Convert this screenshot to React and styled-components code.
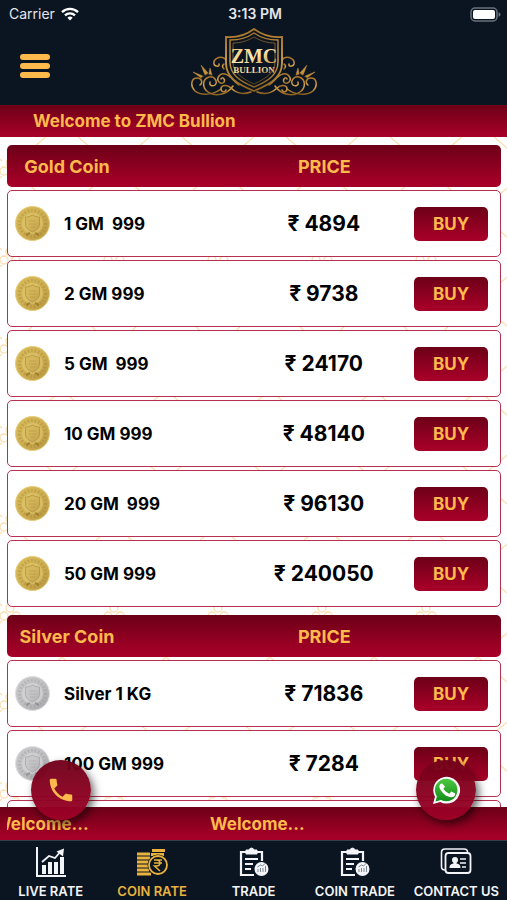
import React from 'react';
import styled, { createGlobalStyle } from 'styled-components';

const GlobalStyle = createGlobalStyle`
  * {
    box-sizing: border-box;
  }

  body {
    margin: 0;
    font-family: Inter, Roboto, "Liberation Sans", sans-serif;
  }
`;

const crimson = 'linear-gradient(to bottom, #6c0017 0%, #a50027 90%)';
const gold = '#fdb94b';

const Screen = styled.div`
  position: relative;
  display: flex;
  flex-direction: column;
  height: 100vh;
  overflow: hidden;
  background-color: #0b1521;
`;

const StatusBar = styled.div`
  display: grid;
  grid-template-columns: 1fr auto 1fr;
  align-items: center;
  height: 28px;
  padding: 0 6px 0 9px;
  color: #e3e6ea;
  font-size: 14px;
  line-height: 20px;
`;

const Carrier = styled.span`
  display: flex;
  align-items: center;
  gap: 6px;
`;

const Clock = styled.span`
  font-weight: 600;
`;

const BatteryIcon = styled.svg`
  justify-self: end;
`;

const Header = styled.header`
  display: grid;
  grid-template-columns: 1fr auto 1fr;
  align-items: center;
  height: 77px;
  padding: 0 20px 4px;
`;

const MenuButton = styled.button`
  display: flex;
  flex-direction: column;
  gap: 3px;
  width: 30px;
  padding: 0;
  border: none;
  background: none;
  cursor: pointer;
`;

const MenuBar = styled.span`
  height: 6px;
  border-radius: 3px;
  background-color: ${gold};
`;

const Welcome = styled.div`
  height: 32px;
  padding: 0 33px;
  background: ${crimson};
  color: ${gold};
  font-size: 17px;
  font-weight: 700;
  line-height: 32px;
`;

/* Danh sách giá */
const Content = styled.main`
  position: relative;
  flex: 1;
  min-height: 0;
  overflow: hidden;
  padding: 8px 6px 0 7px;
  background-color: #ffffff;
`;

const Pattern = styled.svg`
  position: absolute;
  top: 0;
  left: 0;
  width: 100%;
  height: 100%;
`;

const Group = styled.section`
  position: relative;
  display: flex;
  flex-direction: column;
  gap: 3px;
  margin-bottom: 8px;
`;

const GroupHead = styled.div`
  display: grid;
  grid-template-columns: 5fr 4fr 74px;
  align-items: center;
  height: 42px;
  padding-right: 12px;
  border-radius: 5px;
  background: ${crimson};
  color: ${gold};
  font-size: 18px;
  font-weight: 700;
`;

const GroupTitle = styled.span`
  width: 120px;
  text-align: center;
`;

const Centered = styled.span`
  text-align: center;
`;

const Row = styled.div`
  display: grid;
  grid-template-columns: 5fr 4fr 74px;
  align-items: center;
  height: 67px;
  padding-right: 12px;
  border: 1px solid #b5314f;
  border-radius: 5px;
  background-color: #ffffff;
`;

const Product = styled.div`
  display: flex;
  align-items: center;
  gap: 14px;
  padding-left: 7px;
  color: #000000;
  font-size: 17px;
  font-weight: 700;
  white-space: pre;
`;

const Price = styled.span`
  color: #000000;
  font-size: 21px;
  font-weight: 700;
  text-align: center;
`;

const BuyButton = styled.button`
  height: 34px;
  padding: 0;
  border: none;
  border-radius: 5px;
  background: ${crimson};
  color: ${gold};
  font-family: inherit;
  font-size: 17px;
  font-weight: 700;
  cursor: pointer;
`;

const Ticker = styled.div`
  padding: 0 7px;
  background: ${crimson};
`;

const TickerTrack = styled.div`
  display: flex;
  overflow: hidden;
  height: 33px;
  color: ${gold};
  font-size: 17px;
  font-weight: 700;
  line-height: 34px;
`;

const TickerText = styled.span`
  flex: none;
  width: 216px;

  &:first-child {
    margin-left: -13px;
  }
`;

const Fab = styled.a`
  position: absolute;
  bottom: 80px;
  ${(props) => props.$side}: 31px;
  display: flex;
  align-items: center;
  justify-content: center;
  width: 60px;
  height: 60px;
  border-radius: 50%;
  background: linear-gradient(to bottom, rgba(112, 0, 25, 0.96), rgba(158, 0, 38, 0.96));
  box-shadow: 3px 4px 8px rgba(0, 0, 0, 0.6);
`;

const Nav = styled.nav`
  display: flex;
  height: 60px;
  border-top: 1px solid #33404a;
`;

const NavItem = styled.a`
  display: flex;
  flex: 1;
  flex-direction: column;
  align-items: center;
  gap: 5px;
  padding-top: 5px;
  color: ${(props) => (props.$active ? '#e8b23c' : '#f2f4f7')};
  font-size: 13px;
  font-weight: 600;
  line-height: 16px;
  text-decoration: none;
  white-space: nowrap;
`;

const goldCoins = [
  { name: '1 GM  999', price: 4894 },
  { name: '2 GM 999', price: 9738 },
  { name: '5 GM  999', price: 24170 },
  { name: '10 GM 999', price: 48140 },
  { name: '20 GM  999', price: 96130 },
  { name: '50 GM 999', price: 240050 },
];

const silverCoins = [
  { name: 'Silver 1 KG', price: 71836 },
  { name: '100 GM 999', price: 7284 },
  { name: '', price: '' },
];

const Wifi = () => (
  <svg width="18" height="14" viewBox="0 0 18 14" fill="none" stroke="#ffffff" strokeWidth="2.4">
    <path d="M1 5.2a11.4 11.4 0 0 1 16 0" />
    <path d="M4 8.4a7.2 7.2 0 0 1 10 0" />
    <path d="M9 13.6l-2.6-2.8a3.8 3.8 0 0 1 5.2 0z" fill="#ffffff" stroke="none" />
  </svg>
);

const Battery = () => (
  <BatteryIcon width="31" height="15" viewBox="0 0 31 15">
    <rect x="1" y="1" width="26" height="13" rx="4" fill="none" stroke="#6a727b" strokeWidth="1.5" />
    <rect x="3" y="3" width="22" height="9" rx="2" fill="#ffffff" />
    <path d="M28.5 5.2c1.6.6 2 1.4 2 2.3s-.4 1.7-2 2.3z" fill="#6a727b" />
  </BatteryIcon>
);

const Flourish = () => (
  <g fill="none" stroke="url(#goldLine)" strokeWidth="1.5" strokeLinecap="round">
    <path d="M60 64c-8 3-15 1-20-4-4-4-10-3-10 1 0 3 4 4 5 1" />
    <path d="M48 57c-5-3-8-10-14-11-6-1-9 5-6 8 3 3 7 0 5-3-1-2-3-1-3 0" />
    <path d="M42 58c-6 9-18 11-25 6-6-4-6-13 1-15 6-1 9 5 6 8-3 2-6 0-5-3" />
    <path d="M39 45c0-6-2-12-6-15-5-2-11 1-10 6 1 3 6 3 5 0" />
    <path d="M33 41c-2-2-2-4 0-5" />
    <path d="M30 61c-8 6-20 7-26 2-5-5-4-13 2-13 5 0 6 5 3 7" />
    <path d="M14 47l-4-10 7 8zM12 48l-10-4 8 6zM18 46l1-6 2 7z" fill="#c8923a" strokeWidth="0.5" />
  </g>
);

const Logo = () => (
  <svg width="126" height="76" viewBox="0 0 126 76" role="img" aria-label="ZMC Bullion">
    <defs>
      <linearGradient id="goldLine" x1="0" y1="0" x2="0" y2="1">
        <stop offset="0" stopColor="#a9742b" />
        <stop offset="0.5" stopColor="#d3a24c" />
        <stop offset="1" stopColor="#8d611f" />
      </linearGradient>
      <linearGradient id="goldText" x1="0" y1="0" x2="1" y2="1">
        <stop offset="0" stopColor="#e9bf66" />
        <stop offset="0.5" stopColor="#ffe9b0" />
        <stop offset="1" stopColor="#b9822f" />
      </linearGradient>
    </defs>
    <Flourish />
    <g transform="translate(126 0) scale(-1 1)">
      <Flourish />
    </g>
    <g fill="#0b1521" stroke="url(#goldLine)">
      <path d="M63 1c8 6 17 9 28 8v26c0 14-11 21-28 28-17-7-28-14-28-28V9c11 1 20-2 28-8z" strokeWidth="1.8" />
      <path d="M63 5c7 5 15 7 24 7v22c0 12-9 19-24 25-15-6-24-13-24-25V12c9 0 17-2 24-7z" strokeWidth="1.4" />
      <path d="M63 9c7 4 13 6 21 6v19c0 10-8 16-21 22-13-6-21-12-21-22V15c8 0 14-2 21-6z" strokeWidth="0.6" />
    </g>
    <g fill="url(#goldText)" fontFamily="Liberation Serif, serif" fontWeight="bold" textAnchor="middle">
      <text x="63" y="35" fontSize="20">ZMC</text>
      <text x="63" y="45" fontSize="9">BULLION</text>
    </g>
  </svg>
);

const Coin = ({ silver }) => {
  const id = silver ? 'silverFace' : 'goldFace';
  const dark = silver ? '#8f8f92' : '#9b7a24';
  const light = silver ? '#e0e0e2' : '#e6cd78';
  return (
    <svg width="35" height="35" viewBox="0 0 35 35">
      <defs>
        <linearGradient id={id} x1="0" y1="0" x2="1" y2="1">
          <stop offset="0" stopColor={silver ? '#c9c9cb' : '#d8bb5a'} />
          <stop offset="0.5" stopColor={silver ? '#c1c1c3' : '#cfb055'} />
          <stop offset="1" stopColor={silver ? '#a5a5a8' : '#b5953f'} />
        </linearGradient>
      </defs>
      <circle cx="17.5" cy="17.5" r="17" fill={`url(#${id})`} stroke={light} />
      <circle cx="17.5" cy="17.5" r="13" fill="none" stroke={dark} strokeWidth="3" strokeDasharray="1.5 2" opacity="0.35" />
      <circle cx="17.5" cy="17.5" r="10.5" fill={light} opacity="0.5" />
      <path d="M17.5 9c2.5 1.5 4.5 2 7 2v7c0 4-3 6-7 8-4-2-7-4-7-8v-7c2.5 0 4.5-.5 7-2z" fill={`url(#${id})`} stroke={dark} strokeWidth="0.7" opacity="0.7" />
      <path d="M14 15h7M14 18h7M15 21h5" stroke={dark} opacity="0.3" />
      <path d="M11 29l4-2M24 29l-4-2" stroke={dark} strokeWidth="2" opacity="0.8" />
    </svg>
  );
};

const ChainPattern = () => (
  <Pattern aria-hidden="true">
    <defs>
      <pattern id="chain" x="-42" y="-14" width="104" height="89" patternUnits="userSpaceOnUse">
        <g fill="none" stroke="#fbdfae" strokeWidth="1.3">
          <path d="M0 0l44 38M104 0L60 38M0 89l44-36M104 89L60 53" />
          <circle cx="52" cy="40" r="4" />
          <circle cx="46" cy="48" r="4" />
          <circle cx="58" cy="48" r="4" />
        </g>
      </pattern>
    </defs>
    <rect width="100%" height="100%" fill="url(#chain)" />
  </Pattern>
);

const PhoneIcon = () => (
  <svg width="30" height="30" viewBox="0 0 24 24" fill={gold}>
    <path d="M20 15.5c-1.25 0-2.45-.2-3.57-.57a1 1 0 0 0-1.02.24l-2.2 2.2a15.1 15.1 0 0 1-6.59-6.59l2.2-2.2c.28-.28.36-.67.25-1.02A11.4 11.4 0 0 1 8.5 4a1 1 0 0 0-1-1H4a1 1 0 0 0-1 1c0 9.4 7.6 17 17 17a1 1 0 0 0 1-1v-3.5a1 1 0 0 0-1-1z" />
  </svg>
);

const WhatsappIcon = () => (
  <svg width="29" height="29" viewBox="0 0 29 29">
    <defs>
      <linearGradient id="wa" x1="0" y1="0" x2="0" y2="1">
        <stop offset="0" stopColor="#4cc83f" />
        <stop offset="1" stopColor="#128c1c" />
      </linearGradient>
    </defs>
    <path d="M1 28l2-7.2A13.4 13.4 0 1 1 8.300 26z" fill="#ffffff" />
    <path d="M3.500 25.500l1.400-5A11.300 11.300 0 1 1 9 24.100z" fill="url(#wa)" />
    <path d="M10.800 8.200c-.3-.7-.6-.7-1-.7-1.200 0-2.400 1.200-2.400 3 0 1.900 1.400 3.700 1.600 4 .2.200 2.700 4.300 6.600 5.800 3.300 1.300 4 .9 4.700.8.700-.1 2.300-.9 2.600-1.900.3-.9.3-1.700.2-1.800-.1-.2-.4-.3-.8-.5l-2.600-1.200c-.4-.2-.7-.2-.9.2l-1.200 1.500c-.2.300-.5.300-.8.100-.4-.2-1.600-.6-3.100-1.900-1.100-1-1.900-2.300-2.100-2.600-.2-.4 0-.6.2-.8l.6-.7c.2-.200.3-.4.4-.6.1-.3.1-.5 0-.7z" fill="#ffffff" />
  </svg>
);

const ChartIcon = () => (
  <svg width="32" height="32" viewBox="0 0 32 32" fill="none" stroke="currentColor">
    <path d="M2 1v29h29" strokeWidth="2" />
    <path d="M9 28v-9M15 28V16M21 28V16M27 28V11" strokeWidth="4" />
    <path d="M7 16l7-6 6 2 6-7" strokeWidth="1.8" />
    <path d="M21.5 5.5l7.5-3-1 8z" fill="currentColor" stroke="none" />
  </svg>
);

const CoinStackIcon = () => (
  <svg width="32" height="32" viewBox="0 0 32 32" fill="none" stroke="currentColor">
    <path d="M1 8h13M1 12h13M1 16h12M1 20h11M1 24h12M1 28h14M16 4.5h13M15 8.500h13" strokeWidth="3" />
    <circle cx="22" cy="19" r="10.5" fill="#0b1521" stroke="none" />
    <circle cx="22" cy="19" r="9" strokeWidth="1.8" />
    <path d="M18 14h8M18 17h8M18.5 14h2c4.5 0 4.5 6 0 6h-2l5.500 5" strokeWidth="1.5" />
  </svg>
);

const ClipboardIcon = () => (
  <svg width="32" height="32" viewBox="0 0 32 32" fill="none" stroke="currentColor">
    <path d="M8 6H3v23h13M19 6h5v9" strokeWidth="2.2" />
    <path d="M8 8V4h3a2.600 2.600 0 0 1 5 0h3v4z" fill="currentColor" strokeWidth="1" />
    <path d="M7 13h13M7 18h8M7 23h6" strokeWidth="2" />
    <circle cx="23.5" cy="23" r="7" fill="currentColor" stroke="none" />
    <path d="M20 26v-3M22.5 26v-4M25 26v-4M27.5 26v-6M19.5 21l3-2 2 1 3-3" stroke="#7d8792" strokeWidth="1" />
  </svg>
);

const ContactIcon = () => (
  <svg width="32" height="32" viewBox="0 0 32 32" fill="none" stroke="currentColor">
    <path d="M5 24c-2.500 0-3.500-1-3.500-3.500V6.500C1.500 4 2.500 3 5 3h19c2.500 0 3.500 1 3.500 3" strokeWidth="1.6" />
    <rect x="5.5" y="7" width="25" height="20" rx="3" strokeWidth="1.8" />
    <circle cx="15" cy="14" r="3" fill="currentColor" stroke="none" />
    <path d="M13.5 15h3v2.500c3 .8 4 1.500 4 4.500h-11c0-3 1-3.700 4-4.500z" fill="currentColor" stroke="none" />
    <path d="M20 13h6M20 17h6M22 21h4" strokeWidth="1.5" />
  </svg>
);

const CoinGroup = ({ title, coins, silver }) => (
  <Group>
    <GroupHead>
      <GroupTitle>{title}</GroupTitle>
      <Centered>PRICE</Centered>
    </GroupHead>
    {coins.map((coin) => (
      <Row key={coin.name}>
        <Product>
          <Coin silver={silver} />
          {coin.name}
        </Product>
        <Price>{coin.price && `₹ ${coin.price}`}</Price>
        {coin.price && <BuyButton type="button">BUY</BuyButton>}
      </Row>
    ))}
  </Group>
);

const App = () => {
  return (
    <Screen>
      <GlobalStyle />
      <StatusBar>
        <Carrier>
          Carrier <Wifi />
        </Carrier>
        <Clock>3:13 PM</Clock>
        <Battery />
      </StatusBar>
      <Header>
        <MenuButton type="button" aria-label="Menu">
          <MenuBar />
          <MenuBar />
          <MenuBar />
        </MenuButton>
        <Logo />
      </Header>
      <Welcome>Welcome to ZMC Bullion</Welcome>

      <Content>
        <ChainPattern />
        <CoinGroup title="Gold Coin" coins={goldCoins} />
        <CoinGroup title="Silver Coin" coins={silverCoins} silver />
      </Content>

      <Ticker>
        <TickerTrack>
          <TickerText>Welcome...</TickerText>
          <TickerText>Welcome...</TickerText>
        </TickerTrack>
      </Ticker>

      <Nav>
        <NavItem href="#live-rate"><ChartIcon />LIVE RATE</NavItem>
        <NavItem href="#coin-rate" $active><CoinStackIcon />COIN RATE</NavItem>
        <NavItem href="#trade"><ClipboardIcon />TRADE</NavItem>
        <NavItem href="#coin-trade"><ClipboardIcon />COIN TRADE</NavItem>
        <NavItem href="#contact"><ContactIcon />CONTACT US</NavItem>
      </Nav>

      <Fab href="#call" $side="left" aria-label="Call"><PhoneIcon /></Fab>
      <Fab href="#whatsapp" $side="right" aria-label="WhatsApp"><WhatsappIcon /></Fab>
    </Screen>
  );
};

export default App;
